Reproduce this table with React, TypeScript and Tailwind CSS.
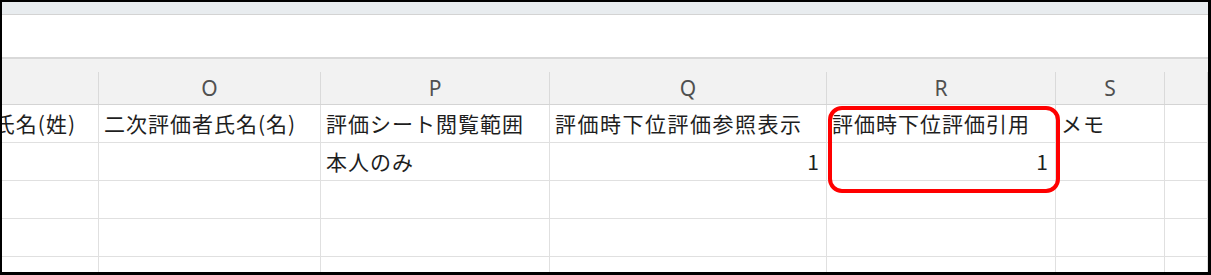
import React from "react";

type Col = { letter: string; width: string };

const cols: Col[] = [
  { letter: "", width: "w-[97px]" },
  { letter: "O", width: "w-[222px]" },
  { letter: "P", width: "w-[229px]" },
  { letter: "Q", width: "w-[277px]" },
  { letter: "R", width: "w-[229px]" },
  { letter: "S", width: "w-[109px]" },
  { letter: "", width: "flex-1" },
];

const jp = "font-['Noto_Sans_CJK_JP','Noto_Sans',sans-serif]";

function Cell({
  width,
  children,
  align = "left",
  clipLeft = false,
  tracking = "tracking-[1px]",
}: {
  width: string;
  children?: React.ReactNode;
  align?: "left" | "right";
  clipLeft?: boolean;
  tracking?: string;
}) {
  const justify = clipLeft || align === "right" ? "justify-end" : "justify-start";
  const pad = clipLeft ? "pr-[22px]" : align === "right" ? "pr-[6px]" : "pl-[5px]";
  return (
    <div
      className={`${width} shrink-0 h-full border-r border-[#e0e0e0] flex items-center overflow-hidden whitespace-nowrap ${justify} ${pad}`}
    >
      {children !== undefined && (
        <span className={`shrink-0 text-[21px] leading-none text-[#1e1e1e] ${tracking} ${jp}`}>
          {children}
        </span>
      )}
    </div>
  );
}

function Row({ cells }: { cells: React.ReactNode[] }) {
  return (
    <div className="flex h-[38px] shrink-0 border-b border-[#e0e0e0]">{cells}</div>
  );
}

export default function App() {
  return (
    <div className="relative w-[1211px] h-[275px] overflow-hidden bg-white border-t-2 border-l-2 border-r-[3px] border-b-[3px] border-black flex flex-col">
      {/* ribbon edge */}
      <div className="h-[13px] shrink-0 bg-[#e8ecef] border-b border-[#d3d3d3]" />
      {/* formula bar area */}
      <div className="h-[44px] shrink-0 bg-white border-b-2 border-[#d9d9d9]" />
      {/* column letters */}
      <div className="flex h-[46px] shrink-0 bg-[#f2f2f2] border-b border-[#d4d4d4]">
        {cols.map((c, i) => (
          <div key={i} className={`${c.width} shrink-0 h-full pt-[13px]`}>
            <div className="h-full flex items-center justify-center border-r border-[#dadada] text-[21px] leading-none text-[#505050] font-['Noto_Sans','Open_Sans',sans-serif]">
              {c.letter}
            </div>
          </div>
        ))}
      </div>

      <Row
        cells={[
          <Cell key="n" width={cols[0].width} clipLeft>
            二次評価者氏名(姓)
          </Cell>,
          <Cell key="o" width={cols[1].width}>二次評価者氏名(名)</Cell>,
          <Cell key="p" width={cols[2].width}>評価シート閲覧範囲</Cell>,
          <Cell key="q" width={cols[3].width} tracking="tracking-[1.5px]">
            評価時下位評価参照表示
          </Cell>,
          <Cell key="r" width={cols[4].width}>評価時下位評価引用</Cell>,
          <Cell key="s" width={cols[5].width}>メモ</Cell>,
          <Cell key="t" width={cols[6].width} />,
        ]}
      />
      <Row
        cells={[
          <Cell key="n" width={cols[0].width} />,
          <Cell key="o" width={cols[1].width} />,
          <Cell key="p" width={cols[2].width}>本人のみ</Cell>,
          <Cell key="q" width={cols[3].width} align="right">1</Cell>,
          <Cell key="r" width={cols[4].width} align="right">1</Cell>,
          <Cell key="s" width={cols[5].width} />,
          <Cell key="t" width={cols[6].width} />,
        ]}
      />
      {[0, 1, 2].map((r) => (
        <Row
          key={r}
          cells={cols.map((c, i) => (
            <Cell key={i} width={c.width} />
          ))}
        />
      ))}

      {/* highlight around column R */}
      <div className="absolute left-[826px] top-[104px] w-[232px] h-[87px] border-4 border-[#ff0000] rounded-[14px] pointer-events-none" />
    </div>
  );
}
